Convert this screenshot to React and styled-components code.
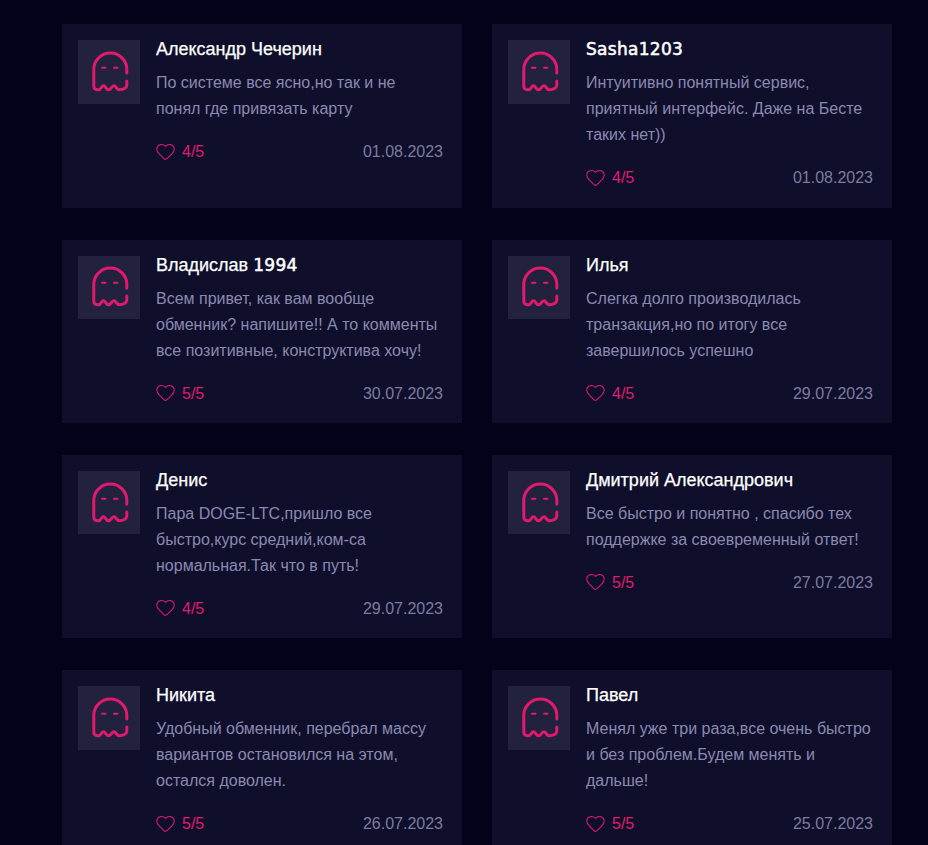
import React from 'react';
import styled, { createGlobalStyle } from 'styled-components';
import { Heart } from 'lucide-react';

const GlobalStyle = createGlobalStyle`
  html, body {
    margin: 0;
    padding: 0;
    height: 100%;
    overflow: hidden;
    background: #02021a;
    font-family: 'Liberation Sans', Arial, sans-serif;
  }
`;

const Grid = styled.div`
  display: grid;
  grid-template-columns: 400px 400px;
  column-gap: 30px;
  row-gap: 32px;
  grid-auto-rows: 183.33px;
  padding: 24.3px 0 0 62px;
`;

const Card = styled.article`
  display: flex;
  align-items: flex-start;
  gap: 16px;
  box-sizing: border-box;
  padding: 16px 19px 16px 16px;
  background: #0f0f2b;
`;

const Avatar = styled.div`
  flex: none;
  display: flex;
  align-items: center;
  justify-content: center;
  width: 62px;
  height: 63.5px;
  background: #22223e;
`;

const Body = styled.div`
  flex: 1;
  min-width: 0;
`;

const Name = styled.h3`
  margin: 0 0 11px;
  font-size: 18px;
  font-weight: 400;
  line-height: 19px;
  color: #fff;
  -webkit-text-stroke: 0.25px #fff;
`;

const Latin = styled.span`
  font-family: 'DejaVu Sans', sans-serif;
  font-size: 17px;
  letter-spacing: 0.3px;
  -webkit-text-stroke: 0.5px #fff;
`;

const Text = styled.p`
  margin: 0;
  font-size: 16px;
  line-height: 26px;
  color: #8b89b0;
`;

const Footer = styled.div`
  display: flex;
  align-items: center;
  justify-content: space-between;
  margin-top: 20px;
  height: 20px;
`;

const Rating = styled.span`
  display: flex;
  align-items: center;
  gap: 6px;
  margin-left: -1px;
  font-size: 16px;
  color: #e01a6e;
`;

const RatingIcon = styled(Heart)`
  margin-top: -2px;
`;

const DateText = styled.time`
  font-size: 16px;
  color: #7d7b9f;
`;

const Ghost = () => (
  <svg width="40" height="46" viewBox="0 0 40 46" fill="none" stroke="#e01a6e" strokeWidth="3" strokeLinecap="round" strokeLinejoin="round">
    <path d="M37.8 24V20.5a16.5 16.5 0 0 0-33 0V37C4.8 40 7 41 9.5 40.8C12 40.5 12.5 36.8 14.5 36.8C16.5 36.8 17 40.8 19.5 40.8C22 40.8 22.5 36.8 25 36.8C27 36.8 27.5 40.8 30.5 40.8C34 40.8 37.8 39 37.8 36V32" />
    <path d="M13 18.7h3.5M25 18.7h3.5" strokeWidth="2" />
  </svg>
);

const reviews = [
  [<>Александр Чечерин</>, 'По системе все ясно,но так и не понял где привязать карту', '4/5', '01.08.2023'],
  [<Latin>Sasha1203</Latin>, 'Интуитивно понятный сервис, приятный интерфейс. Даже на Бесте таких нет))', '4/5', '01.08.2023'],
  [<>Владислав <Latin>1994</Latin></>, 'Всем привет, как вам вообще обменник? напишите!! А то комменты все позитивные, конструктива хочу!', '5/5', '30.07.2023'],
  [<>Илья</>, 'Слегка долго производилась транзакция,но по итогу все завершилось успешно', '4/5', '29.07.2023'],
  [<>Денис</>, 'Пара DOGE-LTC,пришло все быстро,курс средний,ком-са нормальная.Так что в путь!', '4/5', '29.07.2023'],
  [<>Дмитрий Александрович</>, 'Все быстро и понятно , спасибо тех поддержке за своевременный ответ!', '5/5', '27.07.2023'],
  [<>Никита</>, 'Удобный обменник, перебрал массу вариантов остановился на этом, остался доволен.', '5/5', '26.07.2023'],
  [<>Павел</>, 'Менял уже три раза,все очень быстро и без проблем.Будем менять и дальше!', '5/5', '25.07.2023'],
];

export default function App() {
  return (
    <>
      <GlobalStyle />
      <Grid>
        {reviews.map(([name, text, rating, date]) => (
          <Card key={text}>
            <Avatar><Ghost /></Avatar>
            <Body>
              <Name>{name}</Name>
              <Text>{text}</Text>
              <Footer>
                <Rating><RatingIcon size={21} strokeWidth={1.15} />{rating}</Rating>
                <DateText>{date}</DateText>
              </Footer>
            </Body>
          </Card>
        ))}
      </Grid>
    </>
  );
}
